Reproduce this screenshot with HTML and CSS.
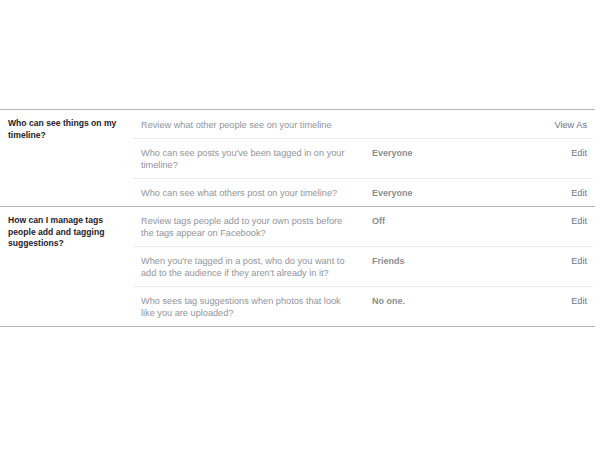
FILE: index.html
```html
<!DOCTYPE html>
<html lang="en">
  <head>
    <meta charset="UTF-8" />
    <title>Timeline and Tagging Settings</title>
    <link rel="stylesheet" href="styles.css">
  </head>
  <body>
    <div class="settings">
      <div class="group">
        <b class="group-title">Who can see things on my timeline?</b>
        <div class="rows">
          <div class="row">
            <span class="desc">Review what other people see on your timeline</span>
            <span class="value"></span>
            <a class="action" href="#">View As</a>
          </div>
          <div class="row">
            <span class="desc">Who can see posts you've been tagged in on your timeline?</span>
            <span class="value">Everyone</span>
            <a class="action" href="#">Edit</a>
          </div>
          <div class="row">
            <span class="desc">Who can see what others post on your timeline?</span>
            <span class="value">Everyone</span>
            <a class="action" href="#">Edit</a>
          </div>
        </div>
      </div>
      <div class="group">
        <b class="group-title">How can I manage tags people add and tagging suggestions?</b>
        <div class="rows">
          <div class="row">
            <span class="desc">Review tags people add to your own posts before the tags appear on Facebook?</span>
            <span class="value">Off</span>
            <a class="action" href="#">Edit</a>
          </div>
          <div class="row">
            <span class="desc">When you're tagged in a post, who do you want to add to the audience if they aren't already in it?</span>
            <span class="value">Friends</span>
            <a class="action" href="#">Edit</a>
          </div>
          <div class="row">
            <span class="desc">Who sees tag suggestions when photos that look like you are uploaded?</span>
            <span class="value">No one.</span>
            <a class="action" href="#">Edit</a>
          </div>
        </div>
      </div>
    </div>
  </body>
</html>
```

FILE: styles.css
```css
body {
  font-family: "Liberation Sans", Arial, sans-serif;
  font-size: 9.2px;
  background-color: #fff;
  color: #1d2129;
  margin: 0;
}

.settings {
  width: 595px;
  margin-top: 109px;
  border-bottom: 1px solid #b4b4b4;
}

.group {
  display: flex;
  border-top: 1px solid #b4b4b4;
}

.group-title {
  width: 118px;
  padding: 8px 7px 0 8px;
  font-size: 8.6px;
  line-height: 11.5px;
  font-weight: bold;
  color: #1d2129;
}

.rows {
  flex: 1;
  padding-right: 2px;
}

.row {
  display: flex;
  padding: 8px 6px 7px 8px;
  line-height: 12px;
  border-top: 1px solid #e9ebee;
}

.row:first-child {
  border-top: none;
}

.group:first-child .row:first-child {
  padding-top: 9px;
}

.desc {
  width: 206px;
  color: #90949c;
}

.value {
  flex: 1;
  margin-left: 25px;
  font-weight: bold;
  font-size: 9px;
  color: #8a8d91;
}

/* 오른쪽 링크 */
.action {
  color: #6c7290;
  text-decoration: none;
}
```
